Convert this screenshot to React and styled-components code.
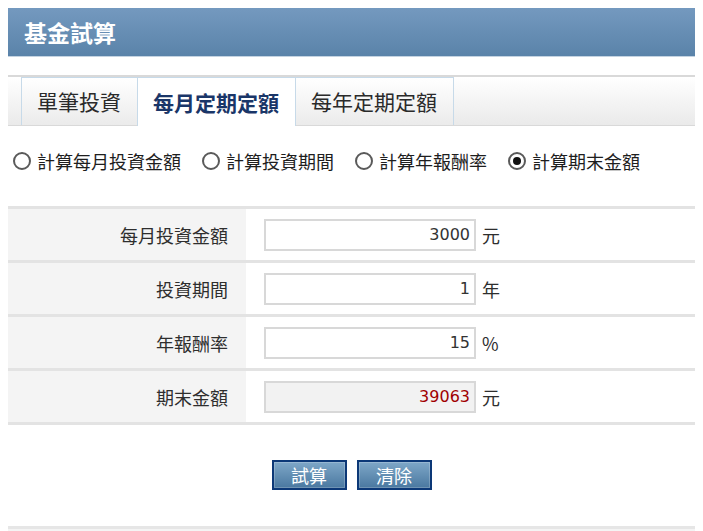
import React, { useState } from 'react';
import styled, { createGlobalStyle } from 'styled-components';

const GlobalStyle = createGlobalStyle`
  body {
    margin: 8px;
    background: #ffffff;
    font-family: 'Noto Sans CJK TC', 'Noto Sans', sans-serif;
  }
`;

const TABS = ['單筆投資', '每月定期定額', '每年定期定額'];
const MODES = ['計算每月投資金額', '計算投資期間', '計算年報酬率', '計算期末金額'];

const App = () => {
  const [tab, setTab] = useState(1);
  const [mode, setMode] = useState(3);

  return (
    <Panel>
      <GlobalStyle />
      <Header>基金試算</Header>

      <TabBar>
        {TABS.map((t, i) => (
          <Tab key={t} $active={i === tab} onClick={() => setTab(i)}>
            {t}
          </Tab>
        ))}
      </TabBar>

      <RadioRow>
        {MODES.map((m, i) => (
          <RadioItem key={m} onClick={() => setMode(i)}>
            <RadioDot $checked={i === mode} />
            {m}
          </RadioItem>
        ))}
      </RadioRow>

      <Table>
        <Row>
          <Label>每月投資金額</Label>
          <Cell>
            <Field defaultValue="3000" />
            <Unit>元</Unit>
          </Cell>
        </Row>
        <Row>
          <Label>投資期間</Label>
          <Cell>
            <Field defaultValue="1" />
            <Unit>年</Unit>
          </Cell>
        </Row>
        <Row>
          <Label>年報酬率</Label>
          <Cell>
            <Field defaultValue="15" />
            <Unit>%</Unit>
          </Cell>
        </Row>
        <Row>
          <Label>期末金額</Label>
          <Cell>
            <Field $result readOnly value="39063" />
            <Unit>元</Unit>
          </Cell>
        </Row>
      </Table>

      <ButtonRow>
        <Button>試算</Button>
        <Button>清除</Button>
      </ButtonRow>

      <Footer />
    </Panel>
  );
};

const Panel = styled.div`
  width: 687px;
`;

const Header = styled.div`
  height: 48px;
  display: flex;
  align-items: center;
  padding-left: 16px;
  background: linear-gradient(#7499bf, #5a83a9);
  border-bottom: 1px solid #c4d3e1;
  color: #ffffff;
  font-size: 23px;
  font-weight: 700;
  line-height: 1;
`;

const TabBar = styled.div`
  display: flex;
  align-items: flex-end;
  margin-top: 18px;
  height: 48px;
  padding-left: 13px;
  background: linear-gradient(#ffffff, #eaeaea);
  border-top: 2px solid #d9d9d9;
  border-bottom: 1px solid #d9d9d9;
`;

const Tab = styled.div`
  display: flex;
  align-items: center;
  padding: 0 16px 0 15px;
  border: 1px solid #c7dae9;
  border-bottom: none;
  margin-right: -1px;
  margin-bottom: ${(p) => (p.$active ? '-1px' : '0')};
  height: ${(p) => (p.$active ? '49px' : '48px')};
  background: ${(p) => (p.$active ? '#ffffff' : 'linear-gradient(#ffffff, #ebebeb)')};
  color: ${(p) => (p.$active ? '#1a3668' : '#2a2a2a')};
  font-size: 21px;
  font-weight: ${(p) => (p.$active ? 700 : 400)};
  line-height: 1;
  cursor: pointer;
  box-sizing: border-box;
`;

const RadioRow = styled.div`
  display: flex;
  align-items: center;
  gap: 21px;
  height: 70px;
  padding: 0 0 10px 5px;
`;

const RadioItem = styled.label`
  display: flex;
  align-items: center;
  gap: 6px;
  font-size: 18px;
  line-height: 1;
  color: #1e1e1e;
  cursor: pointer;
`;

const RadioDot = styled.span`
  width: 18px;
  height: 18px;
  box-sizing: border-box;
  border: 2px solid #5a5a5a;
  border-radius: 50%;
  background: #ffffff;
  display: flex;
  align-items: center;
  justify-content: center;
  &::after {
    content: '';
    width: 8px;
    height: 8px;
    border-radius: 50%;
    background: #111111;
    display: ${(p) => (p.$checked ? 'block' : 'none')};
  }
`;

const Table = styled.div`
  border-bottom: 3px solid #e3e3e3;
`;

const Row = styled.div`
  display: flex;
  height: 51px;
  border-top: 3px solid #e3e3e3;
`;

const Label = styled.div`
  width: 238px;
  box-sizing: border-box;
  padding-right: 18px;
  display: flex;
  align-items: center;
  justify-content: flex-end;
  background: #f4f4f4;
  color: #2e2e2e;
  font-size: 18px;
  line-height: 1;
`;

const Cell = styled.div`
  flex: 1;
  display: flex;
  align-items: center;
  gap: 6px;
  padding-left: 18px;
`;

const Field = styled.input`
  width: 212px;
  height: 32px;
  box-sizing: border-box;
  border: 2px solid #d8d8d8;
  padding: 0 4px 0 0;
  text-align: right;
  font-family: 'DejaVu Sans', sans-serif;
  font-size: 16px;
  color: ${(p) => (p.$result ? '#a00000' : '#333333')};
  background: ${(p) => (p.$result ? '#f2f2f2' : '#ffffff')};
  outline: none;
`;

const Unit = styled.span`
  font-size: 18px;
  color: #2e2e2e;
  line-height: 1;
`;

const ButtonRow = styled.div`
  display: flex;
  justify-content: center;
  gap: 10px;
  padding: 35px 0 36px;
`;

const Button = styled.button`
  width: 75px;
  height: 30px;
  padding: 0;
  border: 2px solid #0c3877;
  background: linear-gradient(#7ea7c8, #4a78a0);
  box-shadow: inset 0 0 0 1px rgba(255, 255, 255, 0.2);
  color: #ffffff;
  font-family: 'Noto Sans CJK TC', sans-serif;
  font-size: 18px;
  line-height: 1;
  cursor: pointer;
`;

const Footer = styled.div`
  height: 10px;
  border-top: 3px solid #e6e6e6;
  background: #f4f4f4;
`;

export default App;
